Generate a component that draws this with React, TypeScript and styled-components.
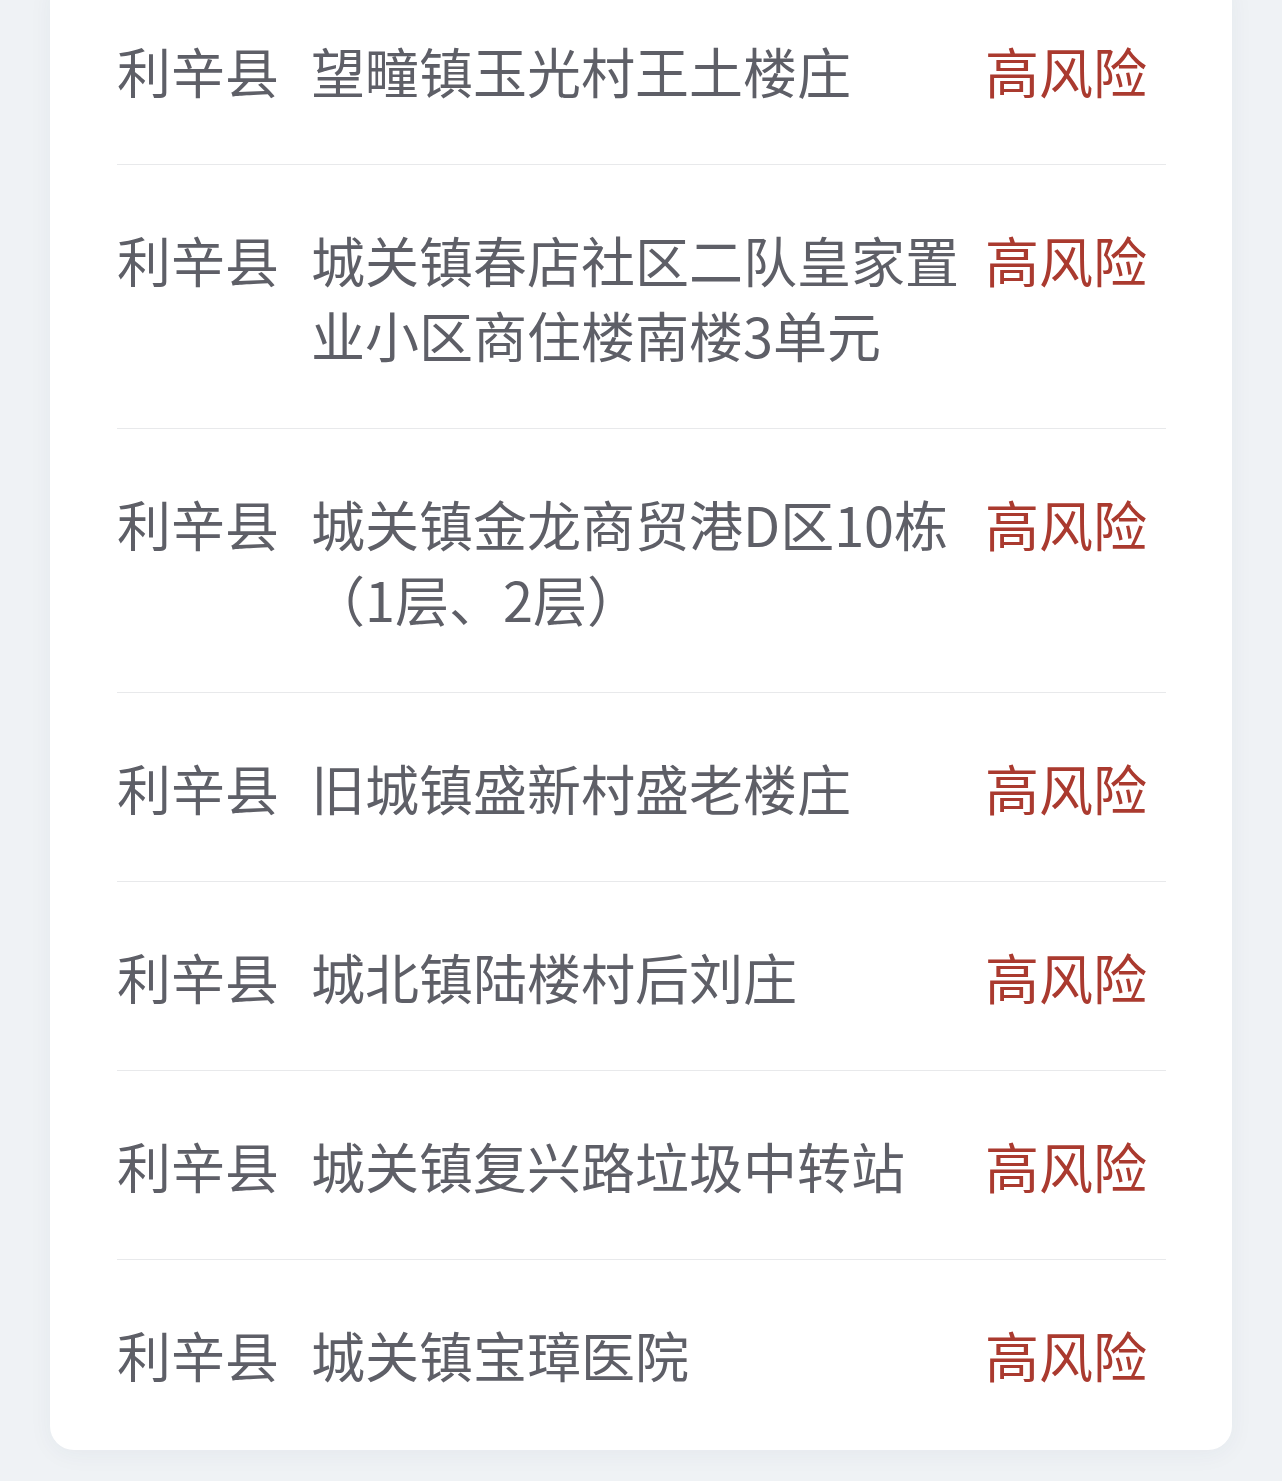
import styled, { createGlobalStyle } from "styled-components";

const areas = [
  { county: "利辛县", address: "望疃镇玉光村王土楼庄", level: "高风险" },
  { county: "利辛县", address: "城关镇春店社区二队皇家置业小区商住楼南楼3单元", level: "高风险" },
  { county: "利辛县", address: "城关镇金龙商贸港D区10栋（1层、2层）", level: "高风险" },
  { county: "利辛县", address: "旧城镇盛新村盛老楼庄", level: "高风险" },
  { county: "利辛县", address: "城北镇陆楼村后刘庄", level: "高风险" },
  { county: "利辛县", address: "城关镇复兴路垃圾中转站", level: "高风险" },
  { county: "利辛县", address: "城关镇宝璋医院", level: "高风险" },
];

const App = () => {
  return (
    <>
      <GlobalStyle />
      <Page>
        <Card>
          {areas.map((area, i) => (
            <Row key={i} last={i === areas.length - 1}>
              <County>{area.county}</County>
              <Address>{area.address}</Address>
              <Level>{area.level}</Level>
            </Row>
          ))}
        </Card>
      </Page>
    </>
  );
};

export default App;

const GlobalStyle = createGlobalStyle`
  html, body {
    margin: 0;
    padding: 0;
    background: #eff2f5;
  }
  body {
    font-family: "Noto Sans CJK SC", "Noto Sans", sans-serif;
  }
`;

const Page = styled.div`
  width: 1282px;
  height: 1481px;
  overflow: hidden;
  background: #eff2f5;
`;

const Card = styled.div`
  margin: -24px 50px 0 50px;
  padding: 0 66px 2px 67px;
  background: #ffffff;
  border-radius: 24px;
  box-shadow: 0 4px 24px rgba(40, 60, 90, 0.05);
`;

const Row = styled.div<{ last?: boolean }>`
  display: grid;
  grid-template-columns: 194px 1fr 181px;
  align-items: start;
  padding: 57px 0 56px;
  border-bottom: ${(p) => (p.last ? "none" : "1px solid #e8e9eb")};
  font-size: 54px;
  line-height: 75px;
`;

const County = styled.div`
  color: #5e5f67;
  white-space: nowrap;
`;

const Address = styled.div`
  color: #5e5f67;
  padding-right: 20px;
`;

const Level = styled.div`
  color: #aa3a2f;
  white-space: nowrap;
`;
